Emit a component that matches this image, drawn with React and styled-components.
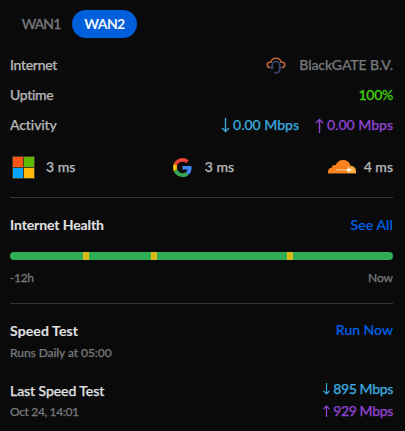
import React from 'react';
import styled, { createGlobalStyle } from 'styled-components';

const GlobalStyle = createGlobalStyle`
  *, *::before, *::after { box-sizing: border-box; }
  body { margin: 0; background: #0a0a0a; }
`;

const Panel = styled.main`
  width: 405px;
  height: 431px;
  padding: 10px 12px 0 10px;
  overflow: hidden;
  background: #0a0a0a;
  color: #b5b6b8;
  font-family: Lato, sans-serif;
  font-size: 14px;
  line-height: 20px;
`;

const Tabs = styled.nav`
  display: flex;
  height: 28px;
  margin-bottom: 12px;
`;

const Tab = styled.button`
  width: ${(p) => (p.$active ? 65 : 62)}px;
  height: 28px;
  padding: 0;
  border: 0;
  border-radius: 14px;
  background: ${(p) => (p.$active ? '#005fdb' : 'transparent')};
  color: ${(p) => (p.$active ? '#f1f5fc' : '#75777a')};
  font: ${(p) => (p.$active ? 700 : 500)} 14px/28px Lato, sans-serif;
  letter-spacing: ${(p) => (p.$active ? -0.6 : -0.9)}px;
  -webkit-text-stroke: ${(p) => (p.$active ? 0 : 0.3)}px currentColor;
`;

const Row = styled.div`
  display: flex;
  align-items: center;
  justify-content: space-between;
  height: ${(p) => p.$height || 30}px;
`;

const Group = styled.div`
  display: flex;
  align-items: center;
  gap: ${(p) => p.$gap || 0}px;
`;

const Text = styled.span`
  color: ${(p) => p.$color || '#b5b6b8'};
  font-size: ${(p) => p.$size || 14}px;
  font-weight: ${(p) => p.$weight || 500};
  letter-spacing: ${(p) => p.$track || 0}px;
  -webkit-text-stroke: ${(p) => (p.$weight ? 0.1 : 0.25)}px currentColor;
  white-space: nowrap;
`;

const Link = styled.a`
  color: #0060e6;
  font-weight: 500;
  letter-spacing: ${(p) => p.$track || 0}px;
  -webkit-text-stroke: 0.2px currentColor;
`;

const Latencies = styled.div`
  display: flex;
  align-items: center;
  justify-content: space-between;
  height: 54px;
  padding-left: 2px;
`;

const LatencyItem = styled(Group)`
  margin-left: ${(p) => p.$offset || 0}px;
`;

const Divider = styled.hr`
  height: 1px;
  margin: 3px 0 0;
  border: 0;
  background: #35363a;
`;

const HealthBar = styled.div`
  display: flex;
  height: 8px;
  border-radius: 4px;
  overflow: hidden;
`;

const Segment = styled.i`
  flex: ${(p) => p.$size} 0 0;
  background: ${(p) => (p.$warn ? '#d9bd16' : '#30ad55')};
`;

const Section = styled.section`
  padding-top: ${(p) => p.$top}px;
`;

const TestResult = styled.div`
  display: flex;
  justify-content: space-between;
`;

const Stack = styled.div`
  display: flex;
  flex-direction: column;
  align-items: ${(p) => (p.$end ? 'flex-end' : 'flex-start')};
  padding-top: ${(p) => p.$top || 0}px;
  line-height: ${(p) => p.$line || 22}px;
`;

const Rate = styled.div`
  display: flex;
  align-items: center;
  gap: ${(p) => p.$gap || 3}px;
  color: ${(p) => (p.$up ? '#8e43cf' : '#3aa8dc')};
`;

const Icon = styled.svg`
  display: block;
  flex: none;
`;

function Arrow({ up, small }) {
  if (small) {
    return (
      <Icon width="7" height="12" viewBox="0 0 7 12" fill="none" stroke="currentColor" strokeWidth="1.2">
        <path d={up ? 'M3.5 12V1M.6 4 3.5 1 6.4 4' : 'M3.5 0v11M.6 8 3.5 11 6.4 8'} />
      </Icon>
    );
  }
  return (
    <Icon width="9" height="15" viewBox="0 0 9 15" fill="none" stroke="currentColor" strokeWidth="1.4">
      <path d={up ? 'M4.5 15V1.5M1 5 4.5 1.5 8 5' : 'M4.5 0v13.5M1 10 4.5 13.5 8 10'} />
    </Icon>
  );
}

function ProviderIcon() {
  return (
    <Icon width="20" height="17" viewBox="0 0 20 17" fill="none" strokeWidth="1.5">
      <path d="M4.5 10.5H4a2.6 2.6 0 0 1-.3-5.2h1.2C5.3 2.8 7.2 1.200 10 1.200s4.700 1.600 5.100 4.100h1.200a2.600 2.600 0 0 1-.3 5.200h-.5" stroke="#c1683a" />
      <path d="M6.300 11.500V8.300a3.700 3.700 0 0 1 7.400 0v3.500c0 2.700-1.200 4.200-3.700 4.200H8.300" stroke="#3b4673" />
      <path d="M6.200 8.500v3.700M13.800 8.500v3.700" stroke="#3b4673" strokeWidth="2" />
    </Icon>
  );
}

function MicrosoftIcon() {
  return (
    <Icon width="23" height="23" viewBox="0 0 23 23">
      <path fill="#473e20" d="M0 0h23v23H0z" />
      <path fill="#ff5318" d="M1 1h10v10H1z" />
      <path fill="#5fb900" d="M12 1h10v10H12z" />
      <path fill="#05a4f4" d="M1 12h10v10H1z" />
      <path fill="#ffba08" d="M12 12h10v10H12z" />
    </Icon>
  );
}

function GoogleIcon() {
  return (
    <Icon width="19" height="19" viewBox="0 0 48 48">
      <path fill="#EA4335" d="M24 9.500c3.540 0 6.710 1.220 9.210 3.600l6.850-6.850C35.900 2.380 30.470 0 24 0 14.620 0 6.510 5.380 2.560 13.220l7.980 6.190C12.430 13.720 17.740 9.500 24 9.500z" />
      <path fill="#4285F4" d="M46.980 24.550c0-1.570-.15-3.090-.38-4.550H24v9.020h12.940c-.58 2.960-2.260 5.480-4.780 7.180l7.730 6c4.510-4.180 7.090-10.360 7.090-17.650z" />
      <path fill="#FBBC05" d="M10.530 28.590A14.500 14.500 0 0 1 9.770 24c0-1.600.27-3.140.76-4.590l-7.980-6.190A24 24 0 0 0 0 24c0 3.880.92 7.540 2.560 10.780l7.970-6.190z" />
      <path fill="#34A853" d="M24 48c6.480 0 11.930-2.130 15.890-5.810l-7.730-6c-2.150 1.450-4.920 2.300-8.160 2.300-6.260 0-11.570-4.220-13.470-9.910l-7.980 6.190C6.510 42.620 14.620 48 24 48z" />
    </Icon>
  );
}

function CloudflareIcon() {
  return (
    <Icon width="28" height="14" viewBox="0 0 28 14">
      <path fill="#f6821f" d="M0 13v-1.500C0 9.300 1.600 7.800 3.800 7.800 3.600 5.700 5.800 4.200 7.700 5.200 8.800 2 11.600 0 15 0c4 0 7.200 2.700 7.800 6.500L21 13z" />
      <path fill="#fbad41" d="M20.500 13 22.600 6c3.300-.2 5.400 2.300 5.400 5.200V13z" />
      <path stroke="#ffd2a0" strokeWidth=".9" d="M8 9.900h17" />
      <path fill="#fff8ed" d="m20.800 6.500 1 2.500 2 .9-2.200.8-1.400 2.200-.7-2.200-1.700-.9 2-.8z" />
      <path stroke="#7b461c" d="M0 13.500h28" />
    </Icon>
  );
}

export default function App() {
  return (
    <Panel>
      <GlobalStyle />
      <Tabs>
        <Tab>WAN1</Tab>
        <Tab $active>WAN2</Tab>
      </Tabs>
      <Row>
        <Text $track={-0.3}>Internet</Text>
        <Group $gap={13}>
          <ProviderIcon />
          <Text $color="#75777a" $track={-0.07}>BlackGATE B.V.</Text>
        </Group>
      </Row>
      <Row>
        <Text $track={-0.35}>Uptime</Text>
        <Text $color="#42d20b" $track={-0.3}>100%</Text>
      </Row>
      <Row>
        <Text $track={-0.1}>Activity</Text>
        <Group $gap={16}>
          <Rate><Arrow /><Text $color="inherit">0.00 Mbps</Text></Rate>
          <Rate $up><Arrow up /><Text $color="inherit">0.00 Mbps</Text></Rate>
        </Group>
      </Row>
      <Latencies>
        <LatencyItem $gap={11}><MicrosoftIcon /><Text>3 ms</Text></LatencyItem>
        <LatencyItem $gap={13} $offset={4}><GoogleIcon /><Text>3 ms</Text></LatencyItem>
        <LatencyItem $gap={8}><CloudflareIcon /><Text>4 ms</Text></LatencyItem>
      </Latencies>
      <Divider />
      <Section $top={17}>
        <Row $height={20}>
          <Text $color="#e0e1e2" $weight={700} $track={-0.1}>Internet Health</Text>
          <Link $track={0.1}>See All</Link>
        </Row>
      </Section>
      <Section $top={17}>
        <HealthBar>
          <Segment $size={73} /><Segment $warn $size={6} />
          <Segment $size={62} /><Segment $warn $size={6} />
          <Segment $size={130} /><Segment $warn $size={6} />
          <Segment $size={100} />
        </HealthBar>
      </Section>
      <Section $top={8}>
        <Row $height={20}>
          <Text $size={12} $color="#75777a" $track={-0.35}>-12h</Text>
          <Text $size={12} $color="#75777a" $track={-0.1}>Now</Text>
        </Row>
      </Section>
      <Section $top={12}>
        <Divider />
      </Section>
      <Section $top={15}>
        <TestResult>
          <Stack $top={1}>
            <Text $color="#e0e1e2" $weight={700} $track={0.12}>Speed Test</Text>
            <Text $size={12} $color="#75777a" $track={-0.07}>Runs Daily at 05:00</Text>
          </Stack>
          <Stack $end>
            <Link>Run Now</Link>
          </Stack>
        </TestResult>
      </Section>
      <Section $top={14}>
        <TestResult>
          <Stack $top={2} $line={21}>
            <Text $color="#e0e1e2" $track={-0.07}>Last Speed Test</Text>
            <Text $size={12} $color="#75777a" $track={-0.35}>Oct 24, 14:01</Text>
          </Stack>
          <Stack $end>
            <Rate><Arrow small /><Text $color="inherit" $track={-0.35}>895 Mbps</Text></Rate>
            <Rate $up><Arrow up small /><Text $color="inherit" $track={-0.35}>929 Mbps</Text></Rate>
          </Stack>
        </TestResult>
      </Section>
    </Panel>
  );
}
